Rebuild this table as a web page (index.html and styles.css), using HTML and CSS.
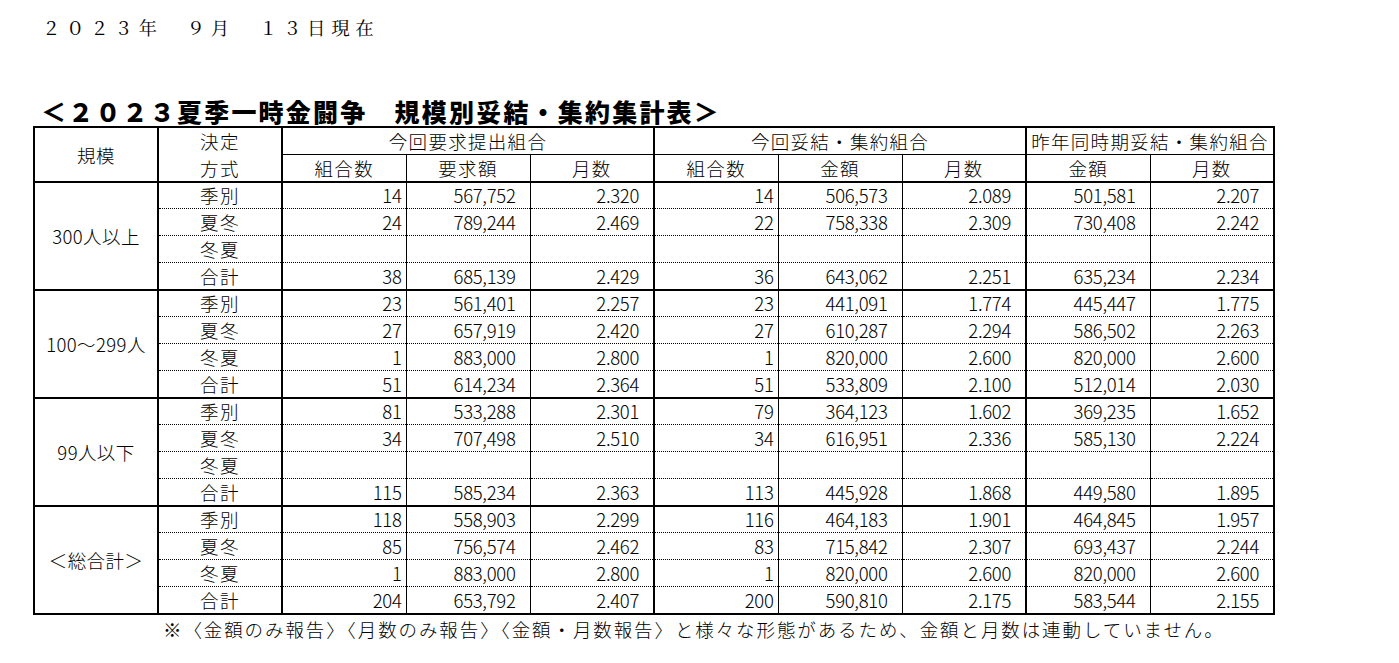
FILE: index.html
```html
<!DOCTYPE html>
<html lang="ja">
<head>
<meta charset="utf-8">
<title>2023夏季一時金闘争 規模別妥結・集約集計表</title>
<link rel="stylesheet" href="styles.css">
</head>
<body>
<div class="page">
  <div class="date">２０２３年　９月　１３日現在</div>
  <div class="title">＜２０２３夏季一時金闘争　規模別妥結・集約集計表＞</div>
  <table class="sheet">
    <colgroup>
      <col class="w"><col class="w"><col class="w"><col class="w"><col class="w">
      <col class="w"><col class="w"><col class="w"><col class="w"><col class="w">
    </colgroup>
    <thead>
      <tr class="top">
        <th rowspan="2" class="lbl">規模</th>
        <th rowspan="2" class="kind two">決定<br>方式</th>
        <th colspan="3" class="end">今回要求提出組合</th>
        <th colspan="3" class="end">今回妥結・集約組合</th>
        <th colspan="2">昨年同時期妥結・集約組合</th>
      </tr>
      <tr class="sub">
        <th>組合数</th><th>要求額</th><th class="end">月数</th>
        <th>組合数</th><th>金額</th><th class="end">月数</th>
        <th>金額</th><th>月数</th>
      </tr>
    </thead>
    <tbody>
      <tr class="grp">
        <td rowspan="4" class="lbl">300人以上</td>
        <td class="kind">季別</td><td class="n">14</td><td class="v">567,752</td><td class="v end">2.320</td><td class="n">14</td><td class="v">506,573</td><td class="v end">2.089</td><td class="v">501,581</td><td class="v">2.207</td>
      </tr>
      <tr class="dot">
        <td class="kind">夏冬</td><td class="n">24</td><td class="v">789,244</td><td class="v end">2.469</td><td class="n">22</td><td class="v">758,338</td><td class="v end">2.309</td><td class="v">730,408</td><td class="v">2.242</td>
      </tr>
      <tr class="dot">
        <td class="kind">冬夏</td><td class="n"></td><td class="v"></td><td class="v end"></td><td class="n"></td><td class="v"></td><td class="v end"></td><td class="v"></td><td class="v"></td>
      </tr>
      <tr class="dot">
        <td class="kind">合計</td><td class="n">38</td><td class="v">685,139</td><td class="v end">2.429</td><td class="n">36</td><td class="v">643,062</td><td class="v end">2.251</td><td class="v">635,234</td><td class="v">2.234</td>
      </tr>

      <tr class="grp">
        <td rowspan="4" class="lbl">100～299人</td>
        <td class="kind">季別</td><td class="n">23</td><td class="v">561,401</td><td class="v end">2.257</td><td class="n">23</td><td class="v">441,091</td><td class="v end">1.774</td><td class="v">445,447</td><td class="v">1.775</td>
      </tr>
      <tr class="dot">
        <td class="kind">夏冬</td><td class="n">27</td><td class="v">657,919</td><td class="v end">2.420</td><td class="n">27</td><td class="v">610,287</td><td class="v end">2.294</td><td class="v">586,502</td><td class="v">2.263</td>
      </tr>
      <tr class="dot">
        <td class="kind">冬夏</td><td class="n">1</td><td class="v">883,000</td><td class="v end">2.800</td><td class="n">1</td><td class="v">820,000</td><td class="v end">2.600</td><td class="v">820,000</td><td class="v">2.600</td>
      </tr>
      <tr class="dot">
        <td class="kind">合計</td><td class="n">51</td><td class="v">614,234</td><td class="v end">2.364</td><td class="n">51</td><td class="v">533,809</td><td class="v end">2.100</td><td class="v">512,014</td><td class="v">2.030</td>
      </tr>

      <tr class="grp">
        <td rowspan="4" class="lbl">99人以下</td>
        <td class="kind">季別</td><td class="n">81</td><td class="v">533,288</td><td class="v end">2.301</td><td class="n">79</td><td class="v">364,123</td><td class="v end">1.602</td><td class="v">369,235</td><td class="v">1.652</td>
      </tr>
      <tr class="dot">
        <td class="kind">夏冬</td><td class="n">34</td><td class="v">707,498</td><td class="v end">2.510</td><td class="n">34</td><td class="v">616,951</td><td class="v end">2.336</td><td class="v">585,130</td><td class="v">2.224</td>
      </tr>
      <tr class="dot">
        <td class="kind">冬夏</td><td class="n"></td><td class="v"></td><td class="v end"></td><td class="n"></td><td class="v"></td><td class="v end"></td><td class="v"></td><td class="v"></td>
      </tr>
      <tr class="dot">
        <td class="kind">合計</td><td class="n">115</td><td class="v">585,234</td><td class="v end">2.363</td><td class="n">113</td><td class="v">445,928</td><td class="v end">1.868</td><td class="v">449,580</td><td class="v">1.895</td>
      </tr>

      <tr class="grp">
        <td rowspan="4" class="lbl">＜総合計＞</td>
        <td class="kind">季別</td><td class="n">118</td><td class="v">558,903</td><td class="v end">2.299</td><td class="n">116</td><td class="v">464,183</td><td class="v end">1.901</td><td class="v">464,845</td><td class="v">1.957</td>
      </tr>
      <tr class="dot">
        <td class="kind">夏冬</td><td class="n">85</td><td class="v">756,574</td><td class="v end">2.462</td><td class="n">83</td><td class="v">715,842</td><td class="v end">2.307</td><td class="v">693,437</td><td class="v">2.244</td>
      </tr>
      <tr class="dot">
        <td class="kind">冬夏</td><td class="n">1</td><td class="v">883,000</td><td class="v end">2.800</td><td class="n">1</td><td class="v">820,000</td><td class="v end">2.600</td><td class="v">820,000</td><td class="v">2.600</td>
      </tr>
      <tr class="dot">
        <td class="kind">合計</td><td class="n">204</td><td class="v">653,792</td><td class="v end">2.407</td><td class="n">200</td><td class="v">590,810</td><td class="v end">2.175</td><td class="v">583,544</td><td class="v">2.155</td>
      </tr>
    </tbody>
  </table>
  <div class="note">※〈金額のみ報告〉〈月数のみ報告〉〈金額・月数報告〉と様々な形態があるため、金額と月数は連動していません。</div>
</div>
</body>
</html>
```

FILE: styles.css
```css
html, body {
  margin: 0;
  padding: 0;
  background: #ffffff;
  color: #000000;
}

body {
  font-family: "MS Gothic", "Noto Sans CJK JP", sans-serif;
}

.page {
  padding: 14px 0 0 33px;
}

.date {
  margin-left: 9px;
  height: 26px;
  font-family: "Noto Serif CJK JP", "Noto Sans CJK JP", serif;
  font-size: 18.5px;
  line-height: 27px;
  letter-spacing: 5.6px;
  font-weight: 400;
}

.title {
  margin: 56px 0 0 8px;
  height: 30px;
  font-size: 25px;
  line-height: 30px;
  font-weight: 900;
  letter-spacing: 2.2px;
}

.sheet {
  border-collapse: collapse;
  table-layout: fixed;
  width: 1241px;
  border: 2px solid #000;
}

.sheet col.w {
  width: 124px;
}

.sheet th,
.sheet td {
  padding: 0;
  height: 26px;
  font-size: 18.5px;
  line-height: 26px;
  font-weight: 300;
  border-left: 1px solid #000;
  border-right: 1px solid #000;
  white-space: nowrap;
  overflow: hidden;
}

.sheet th {
  text-align: center;
  border-bottom: 1px solid #000;
  letter-spacing: 1.3px;
}

.sheet tr.sub th {
  border-bottom: 2px solid #000;
}

.sheet .lbl {
  border-right: 2px solid #000;
  text-align: center;
  vertical-align: middle;
  letter-spacing: 0.4px;
}

.sheet .kind {
  border-right: 2px solid #000;
  text-align: center;
  letter-spacing: 1.5px;
}

.sheet th.two {
  line-height: 26.5px;
}

.sheet .end {
  border-right: 2px solid #000;
}

.sheet td.n {
  text-align: right;
  padding-right: 4px;
  letter-spacing: -0.3px;
}

.sheet td.v {
  text-align: right;
  padding-right: 14px;
  letter-spacing: -0.3px;
}

.sheet tr.grp td {
  border-top: 2px solid #000;
  height: 25px;
  line-height: 25px;
}

.sheet tr.grp td.lbl {
  line-height: 26px;
}

.sheet tr.dot td {
  border-top: 1px dotted #000;
}

.note {
  margin-left: 130px;
  font-size: 18.5px;
  line-height: 28px;
  font-weight: 300;
  letter-spacing: 1.9px;
}
```
